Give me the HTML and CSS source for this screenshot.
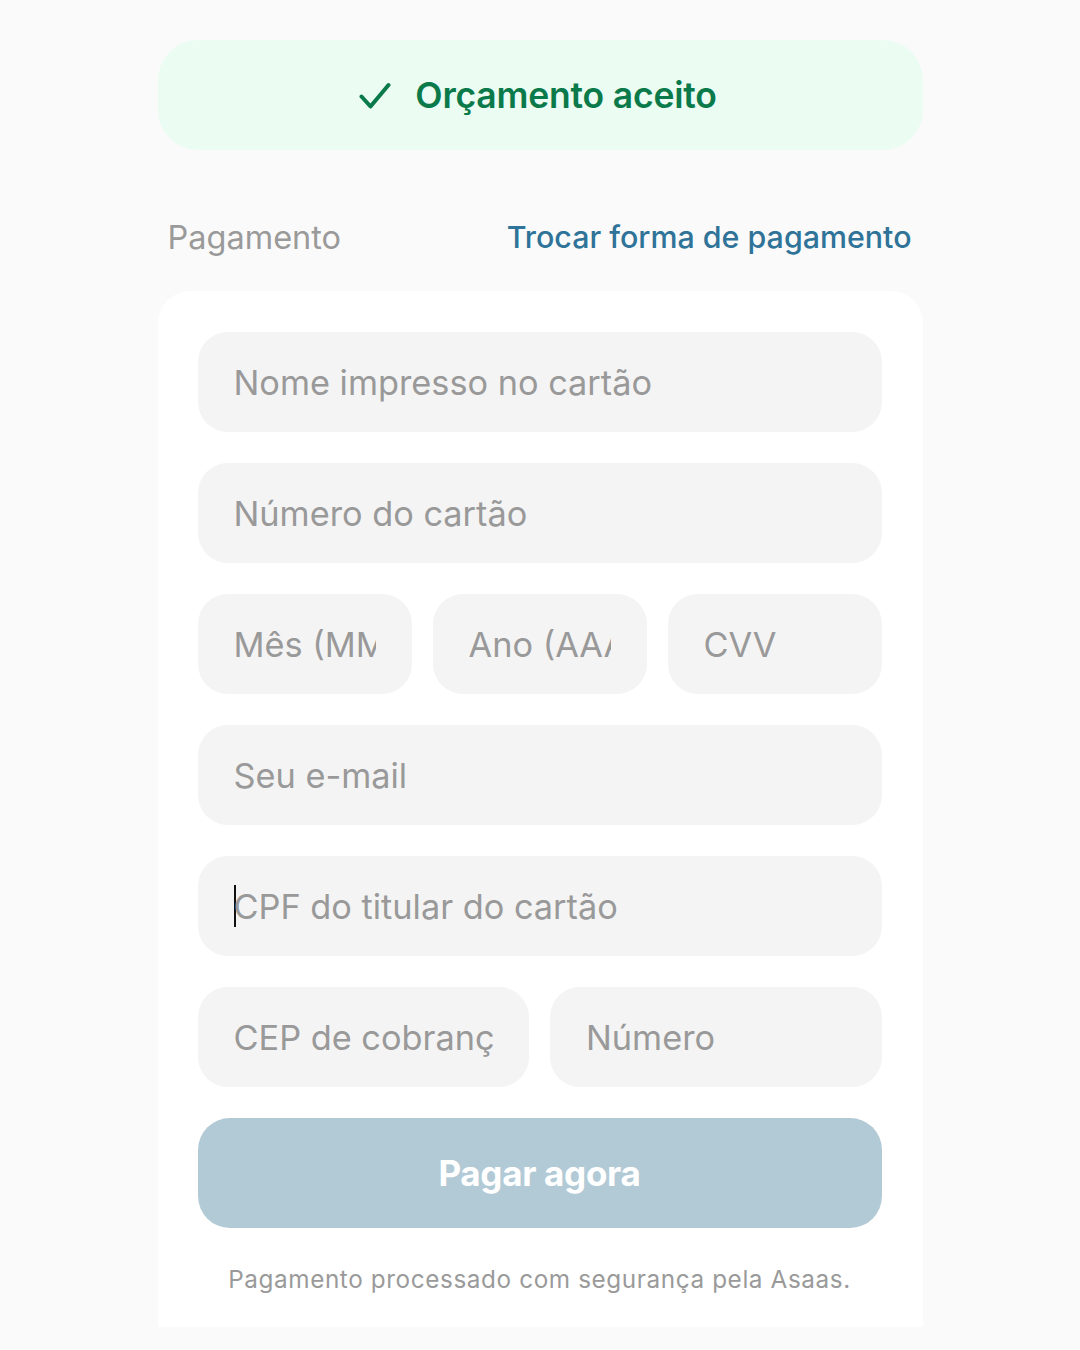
FILE: index.html
```html
<!DOCTYPE html>
<html lang="pt-BR">
<head>
<meta charset="utf-8">
<title>Pagamento</title>
<link rel="stylesheet" href="styles.css">
</head>
<body>
<main class="page">
  <div class="banner">
    <svg class="check" viewBox="0 0 32 28" width="32" height="28" aria-hidden="true">
      <path d="M2.5 14.5 L11.5 24.5 L29.5 3" fill="none" stroke="#0b7a4b" stroke-width="4" stroke-linecap="round" stroke-linejoin="round"/>
    </svg>
    <span class="banner-text">Orçamento aceito</span>
  </div>

  <div class="section-head">
    <span class="section-title">Pagamento</span>
    <a class="switch-link" href="#">Trocar forma de pagamento</a>
  </div>

  <section class="card">
    <div class="field"><span class="ph">Nome impresso no cartão</span></div>
    <div class="field"><span class="ph">Número do cartão</span></div>
    <div class="row row-3">
      <div class="field"><span class="ph clip">Mês (MM)</span></div>
      <div class="field"><span class="ph clip">Ano (AAAA)</span></div>
      <div class="field"><span class="ph">CVV</span></div>
    </div>
    <div class="field"><span class="ph">Seu e-mail</span></div>
    <div class="field"><span class="caret"></span><span class="ph">CPF do titular do cartão</span></div>
    <div class="row row-2">
      <div class="field"><span class="ph clip">CEP de cobrança</span></div>
      <div class="field"><span class="ph">Número</span></div>
    </div>
    <button class="pay" type="button">Pagar agora</button>
    <p class="secure">Pagamento processado com segurança pela Asaas.</p>
  </section>
</main>
</body>
</html>
```

FILE: styles.css
```css
* { box-sizing: border-box; }
html, body {
  margin: 0;
  padding: 0;
  background: #fafafa;
}
body {
  font-family: Inter, "Noto Sans", "Liberation Sans", sans-serif;
  height: 1350px;
  overflow: hidden;
}
.page {
  width: 765px;
  margin: 0 auto;
  padding-top: 40px;
  display: flex;
  flex-direction: column;
}
.banner {
  height: 110px;
  border-radius: 40px;
  background: #ebfcf3;
  display: flex;
  align-items: center;
  justify-content: center;
  gap: 24px;
  padding-right: 4px;
}
.check { display: block; margin-top: 2px; }
.banner-text {
  color: #0b7a4b;
  font-size: 35.5px;
  font-weight: 600;
  letter-spacing: -0.2px;
}
.section-head {
  display: flex;
  justify-content: space-between;
  align-items: center;
  padding: 33px 11px 0 10px;
  height: 141px;
}
.section-title {
  color: #9a9a9a;
  font-size: 32.5px;
  font-weight: 400;
}
.switch-link {
  color: #2f7398;
  font-size: 30.4px;
  font-weight: 500;
  text-decoration: none;
}
.card {
  background: #ffffff;
  border-radius: 32px 32px 0 0;
  padding: 41px 41px 0 40px;
  height: 1036px;
  display: flex;
  flex-direction: column;
  gap: 31px;
}
.row {
  display: grid;
  gap: 21px;
}
.row-3 { grid-template-columns: 1fr 1fr 1fr; }
.row-2 { grid-template-columns: 1fr 1fr; }
.field {
  height: 100px;
  border-radius: 30px;
  background: #f4f4f4;
  display: flex;
  align-items: center;
  padding: 0 36px;
  overflow: hidden;
  min-width: 0;
}
.ph {
  color: #999999;
  font-size: 34.3px;
  font-weight: 400;
  white-space: nowrap;
  overflow: hidden;
}
.clip { display: block; }
.caret {
  display: inline-block;
  width: 2px;
  height: 42px;
  background: #111;
  margin-right: -2px;
  flex: none;
}
.pay {
  height: 110px;
  border: none;
  border-radius: 32px;
  background: #b2cad6;
  color: #ffffff;
  font-family: inherit;
  font-size: 35px;
  font-weight: 700;
  letter-spacing: -0.3px;
}
.secure {
  margin: 0;
  margin-top: 5px;
  text-align: center;
  color: #9a9a9a;
  font-size: 24.3px;
  letter-spacing: 0.6px;
}
```
